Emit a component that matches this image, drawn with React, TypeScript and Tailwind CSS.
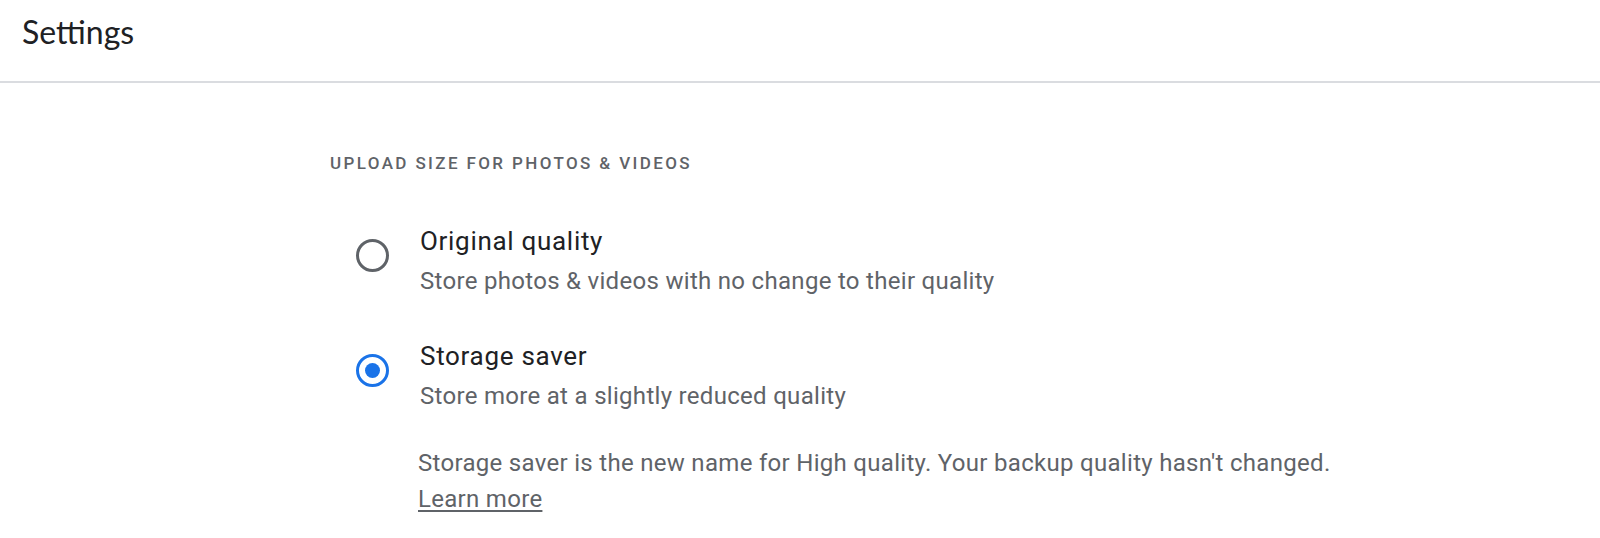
import { useState } from "react";

const options = [
  {
    id: "original",
    title: "Original quality",
    desc: "Store photos & videos with no change to their quality",
  },
  {
    id: "saver",
    title: "Storage saver",
    desc: "Store more at a slightly reduced quality",
  },
];

function Radio({ checked }: { checked: boolean }) {
  return (
    <span
      className={`mt-[16px] flex h-[33px] w-[33px] shrink-0 items-center justify-center rounded-full border-[3px] ${
        checked ? "border-[#1a73e8]" : "border-[#5f6368]"
      }`}
    >
      {checked && <span className="h-[15px] w-[15px] rounded-full bg-[#1a73e8]" />}
    </span>
  );
}

export default function App() {
  const [selected, setSelected] = useState("saver");

  return (
    <div className="min-h-screen bg-white font-['Roboto',sans-serif]">
      <header className="flex h-[83px] items-center border-b-2 border-[#dadce0] pl-[22px]">
        <h1 className="pb-[17px] font-['Lato',sans-serif] text-[32px] text-[#202124]">Settings</h1>
      </header>

      <main className="pl-[330px] pt-[70px]">
        <h2 className="text-[17px] font-medium leading-[20px] tracking-[0.14em] text-[#5f6368]">
          UPLOAD SIZE FOR PHOTOS &amp; VIDEOS
        </h2>

        <div className="mt-[50px] flex flex-col gap-[38px]">
          {options.map((o) => (
            <label
              key={o.id}
              className="flex cursor-pointer items-start gap-[31px] pl-[26px]"
              onClick={() => setSelected(o.id)}
            >
              <Radio checked={selected === o.id} />
              <div>
                <div className="text-[26px] leading-[37px] tracking-[0.7px] text-[#202124]">{o.title}</div>
                <div className="mt-[3px] text-[24px] leading-[37px] tracking-[0.3px] text-[#5f6368]">
                  {o.desc}
                </div>
              </div>
            </label>
          ))}
        </div>

        <div className="mt-[30px] pl-[88px] text-[24px] leading-[36px] tracking-[0.3px] text-[#5f6368]">
          <p>Storage saver is the new name for High quality. Your backup quality hasn't changed.</p>
          <a href="#" className="underline underline-offset-[3px]">
            Learn more
          </a>
        </div>
      </main>
    </div>
  );
}
